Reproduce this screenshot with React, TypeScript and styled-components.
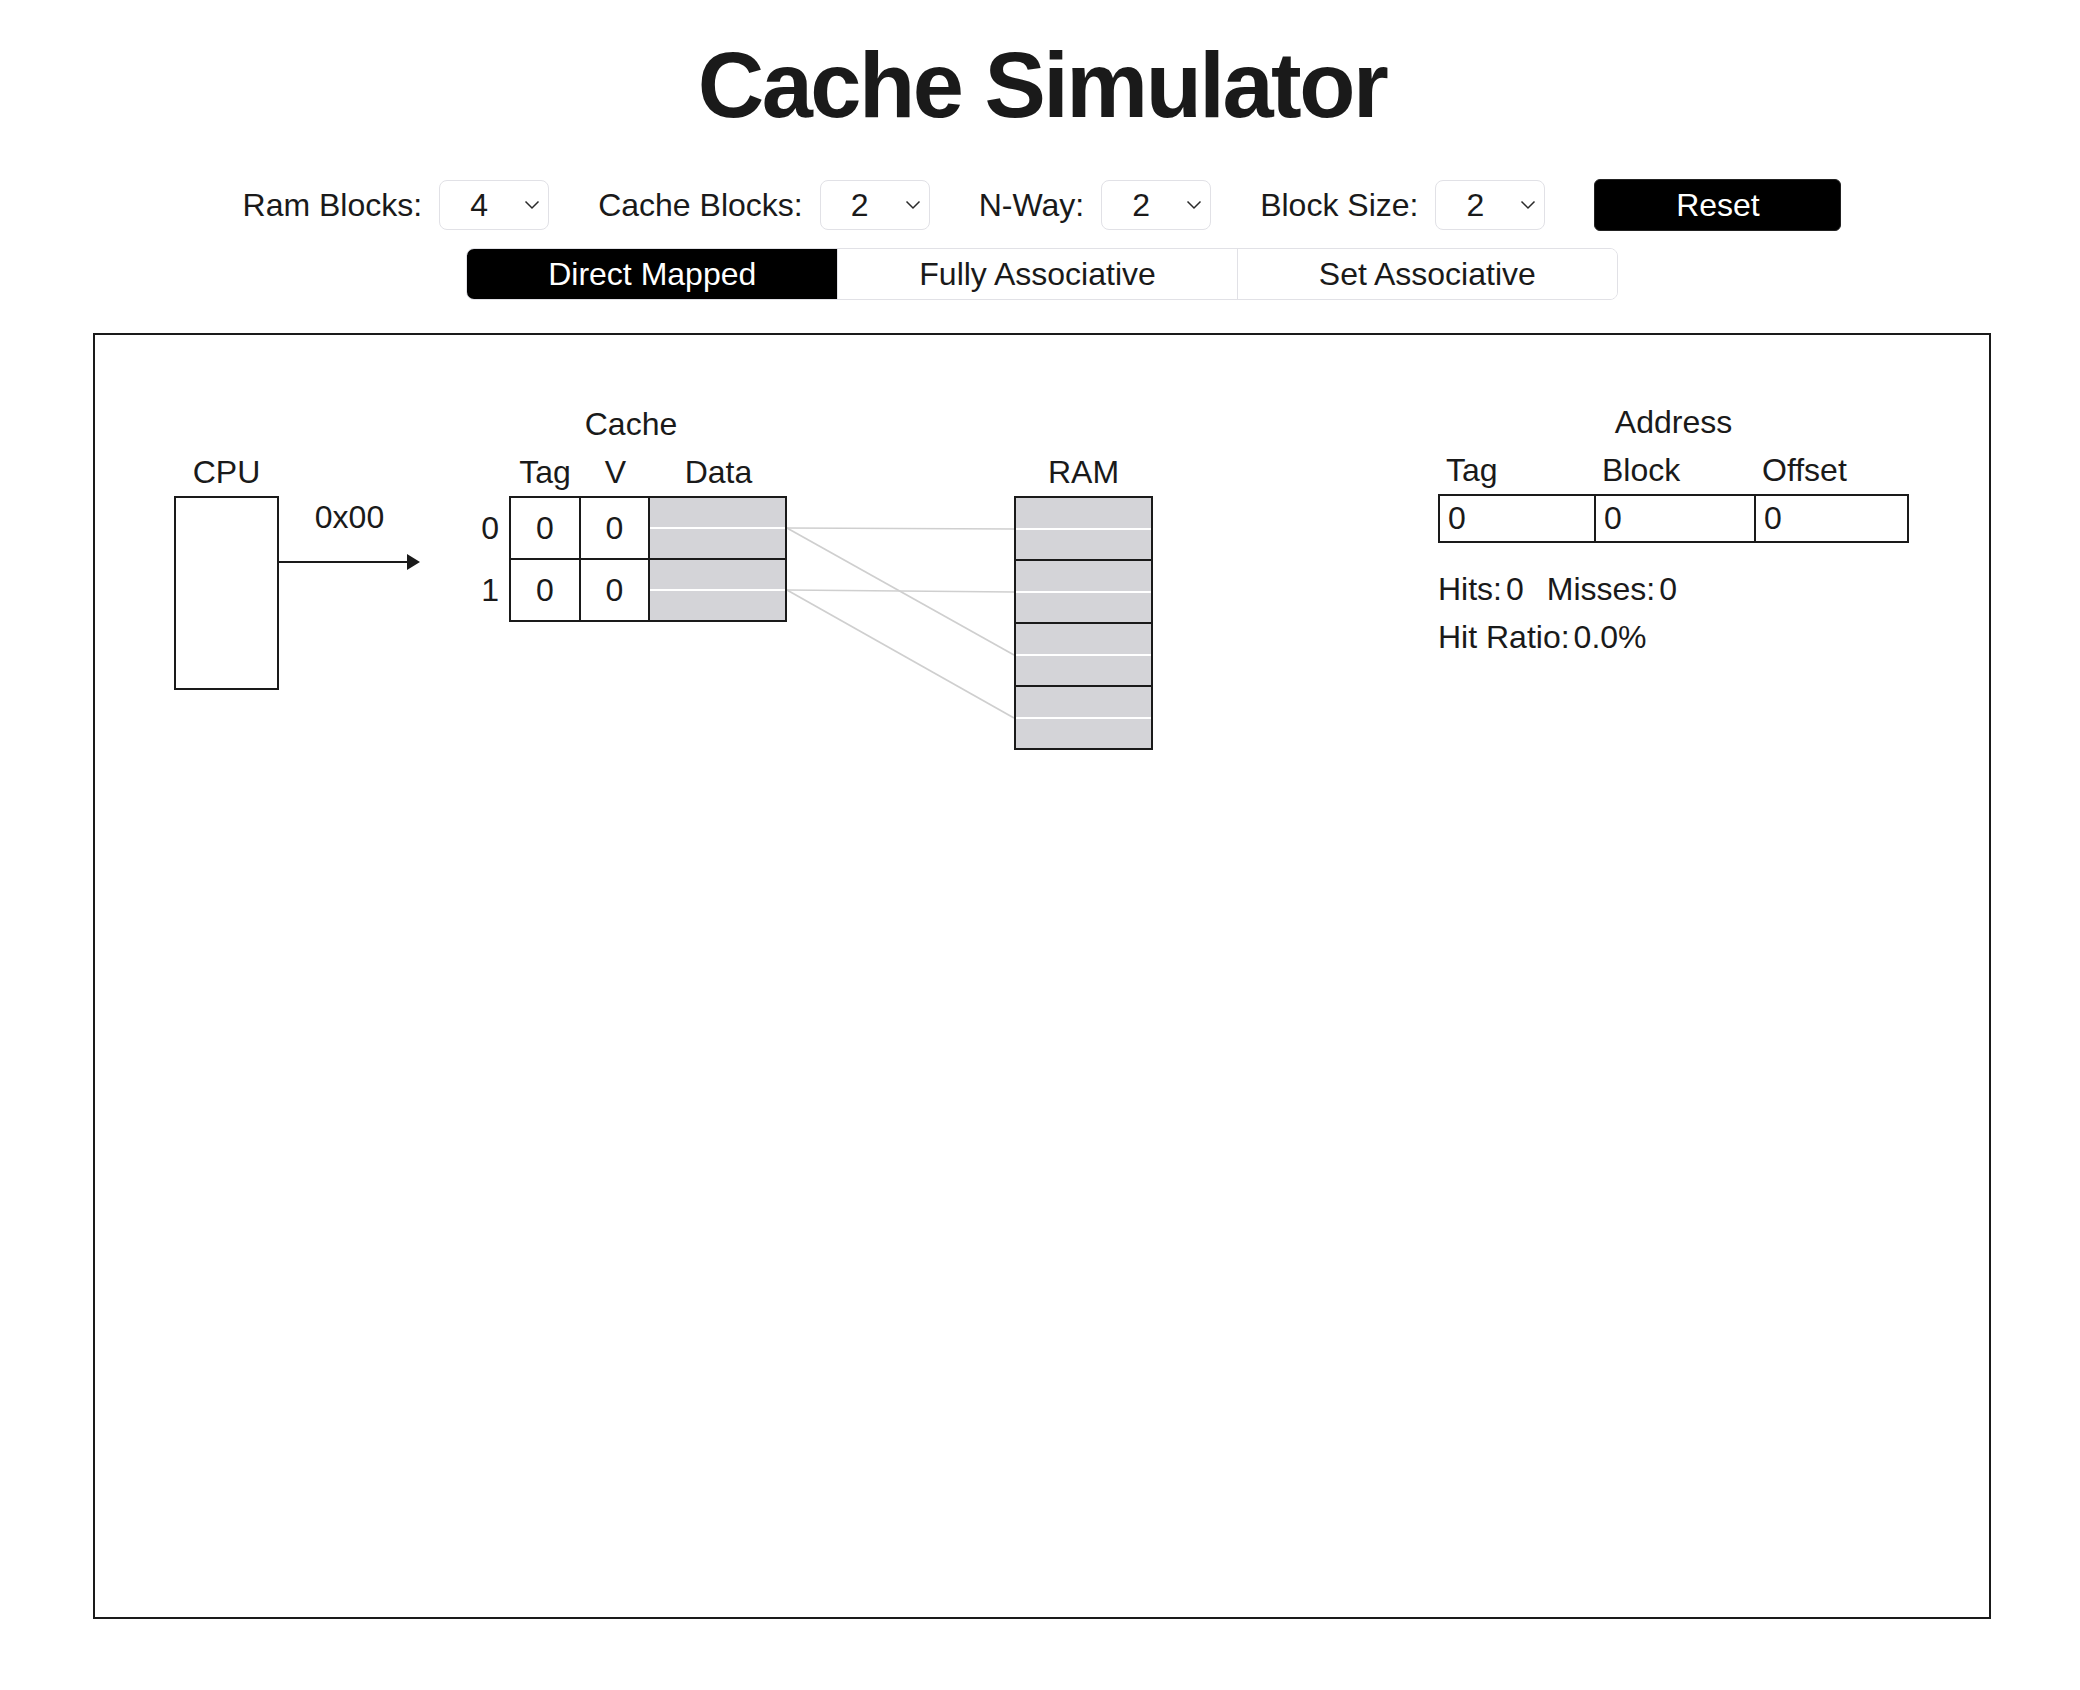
import React, { FC, useState } from "react";
import styled, { createGlobalStyle } from "styled-components";

const GlobalStyle = createGlobalStyle`
  * { box-sizing: border-box; }
  body {
    margin: 8px;
    background: #fff;
    color: #1a1a1a;
    font-family: "Liberation Sans", Arial, Helvetica, sans-serif;
  }
`;

const ROW_H = 62; // cache row incl. bottom border
const RAM_H = 63; // ram block incl. separator
const LINES_W = 227;

type Mode = "direct" | "fully" | "set";

const tabs: { id: Mode; label: string }[] = [
  { id: "direct", label: "Direct Mapped" },
  { id: "fully", label: "Fully Associative" },
  { id: "set", label: "Set Associative" },
];

const Chevron: FC = () => (
  <ChevronIcon width="16" height="10" viewBox="0 0 16 10">
    <polyline points="1.5,1.5 8,8 14.5,1.5" fill="none" stroke="#2a2a2a" strokeWidth="1.5" />
  </ChevronIcon>
);

const NumberSelect: FC<{ value: number; options: number[]; onChange: (v: number) => void }> = ({
  value,
  options,
  onChange,
}) => (
  <SelectWrap>
    <Select value={value} onChange={(e) => onChange(Number(e.target.value))}>
      {options.map((o) => (
        <option key={o} value={o}>
          {o}
        </option>
      ))}
    </Select>
    <Chevron />
  </SelectWrap>
);

const App: FC = () => {
  const [ramBlocks, setRamBlocks] = useState(4);
  const [cacheBlocks, setCacheBlocks] = useState(2);
  const [nWay, setNWay] = useState(2);
  const [blockSize, setBlockSize] = useState(2);
  const [mode, setMode] = useState<Mode>("direct");

  const reset = () => {
    setRamBlocks(4);
    setCacheBlocks(2);
    setNWay(2);
    setBlockSize(2);
  };

  const cacheRows = Array.from({ length: cacheBlocks }, (_, i) => i);
  const ramRows = Array.from({ length: ramBlocks }, (_, i) => i);
  const words = Array.from({ length: blockSize }, (_, i) => i);
  const linesH = 4 + ramBlocks * RAM_H;

  return (
    <Page>
      <GlobalStyle />
      <Title>Cache Simulator</Title>

      <Controls>
        <Field>
          <Label>Ram Blocks:</Label>
          <NumberSelect value={ramBlocks} options={[4, 8, 16]} onChange={setRamBlocks} />
        </Field>
        <Field>
          <Label>Cache Blocks:</Label>
          <NumberSelect value={cacheBlocks} options={[2, 4]} onChange={setCacheBlocks} />
        </Field>
        <Field>
          <Label>N-Way:</Label>
          <NumberSelect value={nWay} options={[2, 4]} onChange={setNWay} />
        </Field>
        <Field>
          <Label>Block Size:</Label>
          <NumberSelect value={blockSize} options={[2, 4]} onChange={setBlockSize} />
        </Field>
        <ResetButton onClick={reset}>Reset</ResetButton>
      </Controls>

      <Tabs>
        {tabs.map((t) => (
          <Tab key={t.id} $active={mode === t.id} onClick={() => setMode(t.id)}>
            {t.label}
          </Tab>
        ))}
      </Tabs>

      <Panel>
        <CpuColumn>
          <Caption />
          <Caption>CPU</Caption>
          <CpuBox />
        </CpuColumn>

        <BusColumn>
          <BusLabel>0x00</BusLabel>
          <svg width="141" height="16" viewBox="0 0 141 16" style={{ marginTop: 17, display: "block" }}>
            <line x1="0" y1="8" x2="130" y2="8" stroke="#1a1a1a" strokeWidth="2" />
            <polygon points="128,0 141,8 128,16" fill="#1a1a1a" />
          </svg>
        </BusColumn>

        <CacheBlock>
          <Caption>Cache</Caption>
          <CacheHeader>
            <span />
            <span>Tag</span>
            <span>V</span>
            <span>Data</span>
          </CacheHeader>
          <CacheBody>
            <RowIndexes>
              {cacheRows.map((i) => (
                <RowIndex key={i}>{i}</RowIndex>
              ))}
            </RowIndexes>
            <CacheTable>
              {cacheRows.map((i) => (
                <React.Fragment key={i}>
                  <Cell>0</Cell>
                  <Cell>0</Cell>
                  <DataCell>
                    {words.map((w) => (
                      <Word key={w} />
                    ))}
                  </DataCell>
                </React.Fragment>
              ))}
            </CacheTable>
          </CacheBody>
        </CacheBlock>

        <LinesColumn>
          <svg width={LINES_W} height={linesH} viewBox={`0 0 ${LINES_W} ${linesH}`}>
            {ramRows.map((r) => {
              const c = r % cacheBlocks;
              const y1 = 2 + c * ROW_H + 30;
              const y2 = 2 + r * RAM_H + 31;
              return <line key={r} x1="0" y1={y1} x2={LINES_W} y2={y2} stroke="#cfcfcf" strokeWidth="1.6" />;
            })}
          </svg>
        </LinesColumn>

        <RamColumn>
          <Caption />
          <Caption>RAM</Caption>
          <RamStack>
            {ramRows.map((r) => (
              <RamBlock key={r}>
                {words.map((w) => (
                  <Word key={w} />
                ))}
              </RamBlock>
            ))}
          </RamStack>
        </RamColumn>

        <AddressBlock>
          <Caption>Address</Caption>
          <AddressHeader>
            <span>Tag</span>
            <span>Block</span>
            <span>Offset</span>
          </AddressHeader>
          <AddressTable>
            <AddressCell>0</AddressCell>
            <AddressCell>0</AddressCell>
            <AddressCell>0</AddressCell>
          </AddressTable>
          <Stats>
            <StatRow>
              <Stat>
                Hits:<span>0</span>
              </Stat>
              <Stat>
                Misses:<span>0</span>
              </Stat>
            </StatRow>
            <StatRow>
              <Stat>
                Hit Ratio:<span>0.0%</span>
              </Stat>
            </StatRow>
          </Stats>
        </AddressBlock>
      </Panel>
    </Page>
  );
};

const Page = styled.div`
  display: flex;
  flex-direction: column;
  align-items: center;
  padding-left: 4px;
`;

const Title = styled.h1`
  margin: 24px 0 0;
  font-size: 92px;
  line-height: 106px;
  font-weight: 700;
  letter-spacing: -2.5px;
  color: #1a1a1a;
`;

const Controls = styled.div`
  display: flex;
  align-items: center;
  gap: 49px;
  margin-top: 41px;
  height: 52px;
`;

const Field = styled.div`
  display: flex;
  align-items: center;
  gap: 17px;
`;

const Label = styled.span`
  font-size: 32px;
  white-space: nowrap;
`;

const SelectWrap = styled.div`
  position: relative;
  width: 110px;
  height: 50px;
`;

const Select = styled.select`
  appearance: none;
  width: 100%;
  height: 100%;
  padding: 0 0 0 30px;
  border: 1px solid #e1e1e6;
  border-radius: 8px;
  background: #fff;
  color: #1a1a1a;
  font-family: inherit;
  font-size: 32px;
  outline: none;
`;

const ChevronIcon = styled.svg`
  position: absolute;
  right: 9px;
  top: 20px;
  pointer-events: none;
`;

const ResetButton = styled.button`
  width: 247px;
  height: 52px;
  border: 1px solid #222;
  border-radius: 6px;
  background: #000;
  color: #fff;
  font-family: inherit;
  font-size: 32px;
  cursor: pointer;
`;

const Tabs = styled.div`
  display: flex;
  margin-top: 17px;
  height: 52px;
  border: 1px solid #e1e1e6;
  border-radius: 8px;
  overflow: hidden;
`;

const Tab = styled.button<{ $active: boolean }>`
  padding: 0 81px;
  border: none;
  background: ${(p) => (p.$active ? "#000" : "#fff")};
  color: ${(p) => (p.$active ? "#fff" : "#1a1a1a")};
  font-family: inherit;
  font-size: 32px;
  white-space: nowrap;
  cursor: pointer;
  & + & {
    border-left: 1px solid #e1e1e6;
  }
`;

const Panel = styled.div`
  display: flex;
  align-items: flex-start;
  width: 1898px;
  height: 1286px;
  margin-top: 33px;
  padding: 65px 0 0 79px;
  border: 2px solid #1a1a1a;
  font-size: 32px;
`;

const Caption = styled.div`
  height: 48px;
  line-height: 48px;
  text-align: center;
  white-space: nowrap;
`;

const CpuColumn = styled.div`
  display: flex;
  flex-direction: column;
  width: 105px;
`;

const CpuBox = styled.div`
  height: 194px;
  border: 2px solid #1a1a1a;
`;

const BusColumn = styled.div`
  width: 141px;
  padding-top: 97px;
`;

const BusLabel = styled.div`
  line-height: 40px;
  text-align: center;
`;

const CacheBlock = styled.div`
  display: flex;
  flex-direction: column;
  width: 312px;
  margin-left: 55px;
`;

const CacheHeader = styled.div`
  display: grid;
  grid-template-columns: 34px 72px 69px 137px;
  height: 48px;
  line-height: 48px;
  text-align: center;
`;

const CacheBody = styled.div`
  display: flex;
`;

const RowIndexes = styled.div`
  width: 34px;
  padding-top: 2px;
`;

const RowIndex = styled.div`
  height: ${ROW_H}px;
  line-height: ${ROW_H - 2}px;
  text-align: right;
  padding-right: 10px;
`;

const CacheTable = styled.div`
  display: grid;
  grid-template-columns: 70px 69px 137px;
  grid-auto-rows: ${ROW_H}px;
  border-top: 2px solid #1a1a1a;
  border-left: 2px solid #1a1a1a;
`;

const Cell = styled.div`
  border-right: 2px solid #1a1a1a;
  border-bottom: 2px solid #1a1a1a;
  line-height: ${ROW_H - 2}px;
  text-align: center;
`;

const DataCell = styled.div`
  display: flex;
  flex-direction: column;
  gap: 2px;
  background: #fff;
  border-right: 2px solid #1a1a1a;
  border-bottom: 2px solid #1a1a1a;
`;

const Word = styled.div`
  flex: 1;
  background: #d4d4d8;
`;

const LinesColumn = styled.div`
  padding-top: 96px;
  svg {
    display: block;
  }
`;

const RamColumn = styled.div`
  display: flex;
  flex-direction: column;
  width: 139px;
`;

const RamStack = styled.div`
  border: 2px solid #1a1a1a;
`;

const RamBlock = styled.div`
  display: flex;
  flex-direction: column;
  gap: 2px;
  height: 61px;
  background: #fff;
  & + & {
    height: 63px;
    border-top: 2px solid #1a1a1a;
  }
`;

const AddressBlock = styled.div`
  display: flex;
  flex-direction: column;
  width: 471px;
  margin: -2px 0 0 285px;
`;

const AddressHeader = styled.div`
  display: grid;
  grid-template-columns: 156px 160px 155px;
  height: 48px;
  line-height: 48px;
  span {
    padding-left: 8px;
  }
`;

const AddressTable = styled.div`
  display: grid;
  grid-template-columns: 154px 160px 153px;
  height: 49px;
  border: 2px solid #1a1a1a;
`;

const AddressCell = styled.div`
  padding-left: 8px;
  line-height: 45px;
  & + & {
    border-left: 2px solid #1a1a1a;
  }
`;

const Stats = styled.div`
  margin-top: 22px;
`;

const StatRow = styled.div`
  display: flex;
  gap: 23px;
  line-height: 48px;
`;

const Stat = styled.div`
  display: flex;
  gap: 4px;
`;

export default App;
